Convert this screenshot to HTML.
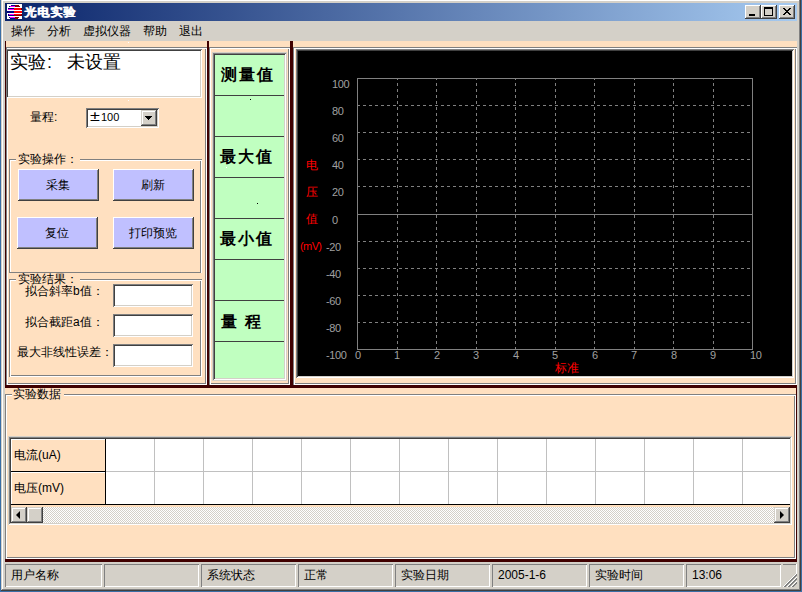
<!DOCTYPE html>
<html><head><meta charset="utf-8">
<style>
*{margin:0;padding:0;box-sizing:border-box}
html,body{width:802px;height:592px;overflow:hidden}
body{background:#3a6ea5;position:relative;font-family:"Liberation Sans",sans-serif;font-size:12px;color:#000;line-height:1}
.a{position:absolute}
.win{left:1px;top:-1px;width:800px;height:592px;background:#d4d0c8;box-shadow:inset -1px -1px #404040,inset 1px 1px #d4d0c8,inset -2px -2px #808080,inset 2px 2px #fff}
.title{left:5px;top:3px;width:792px;height:18px;background:linear-gradient(to right,#0a246a,#a6caf0)}
.ttext{left:24px;top:3px;color:#fff;font-weight:bold;font-size:12px;line-height:18px;white-space:nowrap;letter-spacing:1px;text-shadow:1px 0 0 #fff}
.cb{top:5px;width:16px;height:14px;background:#d4d0c8;box-shadow:inset -1px -1px #404040,inset 1px 1px #fff,inset -2px -2px #808080}
.menu{top:21px;height:20px;line-height:20px;font-size:12px;white-space:nowrap}
.client{left:5px;top:41px;width:792px;height:521px;background:#ffe0c0}
.red{background:#400000}
.etch{box-shadow:inset 1px 1px #808080,inset -1px -1px #fff,inset 2px 2px #fff,inset -2px -2px #808080}
.sunk{background:#fff;box-shadow:inset 1px 1px #808080,inset -1px -1px #fff,inset 2px 2px #404040,inset -2px -2px #d4d0c8}
.grp{border-top:1px solid #808080;box-shadow:inset 1px 0 #808080,inset 2px 0 #fff,0 1px #fff inset}
.btn{background:#c0c0ff;box-shadow:inset -1px -1px #404040,inset 1px 1px #fff,inset -2px -2px #808080;text-align:center;font-size:12px;padding-right:2px}
.lbl{white-space:nowrap;font-size:12px}
.sp{top:564px;height:23px;box-shadow:inset 1px 1px #808080,inset -1px -1px #fff;white-space:nowrap;font-size:12px;line-height:23px;padding-left:6px}
.kai{font-family:"Liberation Sans",sans-serif;font-weight:bold;font-size:16px;white-space:nowrap;letter-spacing:2px}
i{display:inline-block;width:1em;font-style:normal;text-align:center}
.ttext i{margin-right:1px}
.kai i{margin-right:2px}
</style></head><body>
<div class="a win"></div>
<div class="a title"></div>
<svg class="a" style="left:7px;top:4px" width="16" height="16" viewBox="0 0 16 16" shape-rendering="crispEdges">
<rect x="0" y="0" width="15" height="15" fill="#fff"/>
<rect x="4" y="1" width="4" height="1" fill="#000080"/>
<rect x="8" y="1" width="4" height="1" fill="#800000"/>
<rect x="2" y="2" width="1" height="1" fill="#000080"/>
<rect x="3" y="2" width="5" height="1" fill="#ff00ff"/>
<rect x="8" y="2" width="5" height="1" fill="#800000"/>
<rect x="1" y="4" width="6" height="1" fill="#000080"/>
<rect x="7" y="4" width="7" height="1" fill="#ff0000"/>
<rect x="14" y="4" width="1" height="1" fill="#800000"/>
<rect x="1" y="5" width="6" height="1" fill="#ff00ff"/>
<rect x="7" y="5" width="7" height="1" fill="#ff0000"/>
<rect x="14" y="5" width="1" height="1" fill="#800000"/>
<rect x="0" y="7" width="7" height="1" fill="#000080"/>
<rect x="7" y="7" width="8" height="1" fill="#ff0000"/>
<rect x="0" y="8" width="7" height="1" fill="#000080"/>
<rect x="7" y="8" width="8" height="1" fill="#ff0000"/>
<rect x="1" y="10" width="1" height="1" fill="#000080"/>
<rect x="2" y="10" width="5" height="1" fill="#ff00ff"/>
<rect x="7" y="10" width="7" height="1" fill="#ff0000"/>
<rect x="14" y="10" width="1" height="1" fill="#800000"/>
<rect x="1" y="11" width="6" height="1" fill="#000080"/>
<rect x="7" y="11" width="8" height="1" fill="#800000"/>
<rect x="2" y="13" width="1" height="1" fill="#000080"/>
<rect x="3" y="13" width="5" height="1" fill="#ff00ff"/>
<rect x="8" y="13" width="4" height="1" fill="#800000"/>
<rect x="3" y="14" width="5" height="1" fill="#000080"/>
<rect x="8" y="14" width="3" height="1" fill="#800000"/>

</svg>
<div class="a ttext"><i>光</i><i>电</i><i>实</i><i>验</i></div>
<div class="a cb" style="left:745px"><div class="a" style="left:4px;top:9px;width:6px;height:2px;background:#000"></div></div>
<div class="a cb" style="left:761px"><div class="a" style="left:3px;top:2px;width:9px;height:9px;border:1px solid #000;border-top-width:2px"></div></div>
<div class="a cb" style="left:779px"><svg class="a" style="left:4px;top:3px" width="8" height="7" shape-rendering="crispEdges" fill="#000"><rect x="0" y="0" width="1" height="1"/><rect x="1" y="0" width="1" height="1"/><rect x="6" y="0" width="1" height="1"/><rect x="7" y="0" width="1" height="1"/><rect x="1" y="1" width="1" height="1"/><rect x="2" y="1" width="1" height="1"/><rect x="5" y="1" width="1" height="1"/><rect x="6" y="1" width="1" height="1"/><rect x="2" y="2" width="1" height="1"/><rect x="3" y="2" width="1" height="1"/><rect x="4" y="2" width="1" height="1"/><rect x="5" y="2" width="1" height="1"/><rect x="3" y="3" width="1" height="1"/><rect x="4" y="3" width="1" height="1"/><rect x="2" y="4" width="1" height="1"/><rect x="3" y="4" width="1" height="1"/><rect x="4" y="4" width="1" height="1"/><rect x="5" y="4" width="1" height="1"/><rect x="1" y="5" width="1" height="1"/><rect x="2" y="5" width="1" height="1"/><rect x="5" y="5" width="1" height="1"/><rect x="6" y="5" width="1" height="1"/><rect x="0" y="6" width="1" height="1"/><rect x="1" y="6" width="1" height="1"/><rect x="6" y="6" width="1" height="1"/><rect x="7" y="6" width="1" height="1"/></svg></div>
<div class="a menu" style="left:11px"><i>操</i><i>作</i></div>
<div class="a menu" style="left:47px"><i>分</i><i>析</i></div>
<div class="a menu" style="left:83px"><i>虚</i><i>拟</i><i>仪</i><i>器</i></div>
<div class="a menu" style="left:143px"><i>帮</i><i>助</i></div>
<div class="a menu" style="left:179px"><i>退</i><i>出</i></div>

<div class="a client"></div>

<!-- left panel -->
<div class="a red" style="left:5px;top:41px;width:1px;height:346px"></div>
<div class="a etch" style="left:6px;top:47px;width:201px;height:338px"></div>
<div class="a sunk" style="left:6px;top:49px;width:196px;height:49px"></div>
<div class="a" style="left:10px;top:52px;font-size:18px;line-height:20px;white-space:nowrap"><i>实</i><i>验</i><span style="margin-left:1px">:</span><span style="margin-left:15px"><i>未</i><i>设</i><i>置</i></span></div>
<div class="a lbl" style="left:30px;top:111px"><i>量</i><i>程</i>:</div>
<div class="a sunk" style="left:86px;top:108px;width:73px;height:20px"></div>
<div class="a lbl" style="left:89px;top:111px"><span style="display:inline-block;width:12px;text-align:center;transform:translateY(-1px) scale(1.5,1.2)">±</span><span style="font-size:11px">100</span></div>
<div class="a" style="left:141px;top:110px;width:16px;height:16px;background:#d4d0c8;box-shadow:inset -1px -1px #404040,inset 1px 1px #d4d0c8,inset -2px -2px #808080,inset 2px 2px #fff"><svg class="a" style="left:4px;top:6px" width="7" height="4" shape-rendering="crispEdges"><rect x="0" y="0" width="7" height="1"/><rect x="1" y="1" width="5" height="1"/><rect x="2" y="2" width="3" height="1"/><rect x="3" y="3" width="1" height="1"/></svg></div>

<div class="a" style="left:9px;top:159px;width:193px;height:114px;box-shadow:inset 1px 1px #808080,inset -1px 0 #fff,inset 0 -1px #808080,inset 2px 2px #fff,inset -2px 0 #808080"></div>
<div class="a lbl" style="left:16px;top:153px;width:64px;height:12px;background:#ffe0c0;padding-left:2px"><i>实</i><i>验</i><i>操</i><i>作</i><i>：</i></div>
<div class="a btn" style="left:18px;top:169px;width:81px;height:32px;line-height:32px"><i>采</i><i>集</i></div>
<div class="a btn" style="left:113px;top:169px;width:81px;height:32px;line-height:32px"><i>刷</i><i>新</i></div>
<div class="a btn" style="left:17px;top:217px;width:81px;height:32px;line-height:32px"><i>复</i><i>位</i></div>
<div class="a btn" style="left:113px;top:217px;width:81px;height:32px;line-height:32px"><i>打</i><i>印</i><i>预</i><i>览</i></div>

<div class="a" style="left:9px;top:279px;width:193px;height:98px;box-shadow:inset 1px 1px #808080,inset -1px -1px #fff,inset 2px 2px #fff,inset -2px -2px #808080"></div>
<div class="a lbl" style="left:16px;top:273px;width:64px;height:12px;background:#ffe0c0;padding-left:2px"><i>实</i><i>验</i><i>结</i><i>果</i><i>：</i></div>
<div class="a lbl" style="left:25px;top:285px"><i>拟</i><i>合</i><i>斜</i><i>率</i>b<i>值</i><i>：</i></div>
<div class="a lbl" style="left:25px;top:316px"><i>拟</i><i>合</i><i>截</i><i>距</i>a<i>值</i><i>：</i></div>
<div class="a lbl" style="left:17px;top:346px"><i>最</i><i>大</i><i>非</i><i>线</i><i>性</i><i>误</i><i>差</i><i>：</i></div>
<div class="a sunk" style="left:113px;top:284px;width:80px;height:23px"></div>
<div class="a sunk" style="left:113px;top:314px;width:80px;height:23px"></div>
<div class="a sunk" style="left:113px;top:344px;width:80px;height:23px"></div>

<!-- middle panel -->
<div class="a red" style="left:207px;top:41px;width:2px;height:346px"></div>
<div class="a etch" style="left:209px;top:47px;width:81px;height:338px"></div>
<div class="a" style="left:212px;top:52px;width:75px;height:329px;background:#c0ffc0;box-shadow:inset 1px 1px #d4d0c8,inset -1px -1px #d4d0c8,inset 2px 2px #808080,inset -2px -2px #fff,inset 3px 3px #404040,inset -3px -3px #d4d0c8"></div>
<div class="a" style="left:215px;top:95px;width:69px;height:1px;background:#404040"></div>
<div class="a" style="left:215px;top:136px;width:69px;height:1px;background:#404040"></div>
<div class="a" style="left:215px;top:177px;width:69px;height:1px;background:#404040"></div>
<div class="a" style="left:215px;top:218px;width:69px;height:1px;background:#404040"></div>
<div class="a" style="left:215px;top:259px;width:69px;height:1px;background:#404040"></div>
<div class="a" style="left:215px;top:300px;width:69px;height:1px;background:#404040"></div>
<div class="a" style="left:215px;top:341px;width:69px;height:1px;background:#404040"></div>
<div class="a kai" style="left:221px;top:67px"><i>测</i><i>量</i><i>值</i></div>
<div class="a kai" style="left:220px;top:149px"><i>最</i><i>大</i><i>值</i></div>
<div class="a kai" style="left:220px;top:231px"><i>最</i><i>小</i><i>值</i></div>
<div class="a kai" style="left:221px;top:314px"><i>量</i> <i>程</i></div>
<div class="a" style="left:250px;top:99px;width:1px;height:1px;background:#000"></div>
<div class="a" style="left:257px;top:203px;width:1px;height:1px;background:#000"></div>

<!-- right panel -->
<div class="a red" style="left:290px;top:41px;width:3px;height:346px"></div>
<div class="a etch" style="left:293px;top:47px;width:504px;height:338px"></div>
<div class="a" style="left:296px;top:49px;width:498px;height:329px;background:#000;box-shadow:inset 1px 1px #808080,inset -1px -1px #fff,inset 2px 2px #404040,inset -2px -2px #d4d0c8"></div>
<svg class="a" style="left:0;top:0" width="802" height="592" shape-rendering="crispEdges">
<g stroke="#808080" stroke-width="1" fill="none">
<path d="M357.5 78 V349.5 H752.5 V78.5 H357" />
<path d="M357 214.5 H752" />
</g>
<g stroke="#808080" stroke-width="1" stroke-dasharray="3 3" fill="none">
<path d="M357 105.5 H752 M357 132.5 H752 M357 159.5 H752 M357 186.5 H752 M357 241.5 H752 M357 268.5 H752 M357 295.5 H752 M357 322.5 H752"/>
<path d="M397.5 350 V78 M436.5 350 V78 M476.5 350 V78 M515.5 350 V78 M555.5 350 V78 M594.5 350 V78 M634.5 350 V78 M673.5 350 V78 M713.5 350 V78"/>
</g>
</svg>
<div class="a" style="left:0;top:0;font-size:11px;color:#a0a0a0;white-space:nowrap;letter-spacing:-0.4px">
<span class="a" style="left:332px;top:79px">100</span><span class="a" style="left:332px;top:106px">80</span><span class="a" style="left:332px;top:133px">60</span><span class="a" style="left:332px;top:160px">40</span><span class="a" style="left:332px;top:187px">20</span><span class="a" style="left:332px;top:215px">0</span><span class="a" style="left:326px;top:242px">-20</span><span class="a" style="left:326px;top:269px">-40</span><span class="a" style="left:326px;top:296px">-60</span><span class="a" style="left:326px;top:323px">-80</span><span class="a" style="left:326px;top:350px">-100</span>
</div>
<div class="a" style="left:306px;top:152px;color:#f00;font-size:12px;line-height:27px;white-space:pre"><i>电</i>
<i>压</i>
<i>值</i></div>
<div class="a" style="left:300px;top:241px;color:#f00;font-size:11px;white-space:nowrap;letter-spacing:-0.6px">(mV)</div>
<div class="a" style="left:555px;top:362px;color:#f00;font-size:12px;white-space:nowrap"><i>标</i><i>准</i></div>
<div class="a" style="left:0;top:350px;font-size:11px;color:#a0a0a0;white-space:nowrap;letter-spacing:-0.4px">
<span class="a" style="left:355px">0</span><span class="a" style="left:394px">1</span><span class="a" style="left:434px">2</span><span class="a" style="left:473px">3</span><span class="a" style="left:513px">4</span><span class="a" style="left:552px">5</span><span class="a" style="left:592px">6</span><span class="a" style="left:631px">7</span><span class="a" style="left:671px">8</span><span class="a" style="left:710px">9</span><span class="a" style="left:750px">10</span>
</div>

<div class="a" style="left:128px;top:42px;width:1px;height:1px;background:#fff"></div><div class="a" style="left:128px;top:100px;width:1px;height:1px;background:#fff"></div><div class="a" style="left:226px;top:167px;width:1px;height:1px;background:#fff"></div>
<!-- horizontal red separators -->
<div class="a red" style="left:5px;top:385px;width:792px;height:3px"></div>

<!-- bottom panel -->
<div class="a" style="left:5px;top:394px;width:791px;height:165px;box-shadow:inset 1px 1px #808080,inset -1px -1px #fff,inset 2px 2px #fff,inset -2px -2px #808080"></div>
<div class="a red" style="left:796px;top:387px;width:1px;height:175px"></div>
<div class="a lbl" style="left:12px;top:388px;width:52px;height:12px;background:#ffe0c0;padding-left:1px"><i>实</i><i>验</i><i>数</i><i>据</i></div>

<!-- grid -->
<div class="a" style="left:8px;top:436px;width:784px;height:89px;background:#ffe0c0;box-shadow:inset 1px 1px #d4d0c8,inset -1px -1px #fff,inset 2px 2px #808080,inset -2px -2px #d4d0c8,inset 3px 3px #404040"></div>
<svg class="a" style="left:0;top:0" width="802" height="592" shape-rendering="crispEdges">
<rect x="106" y="439" width="684" height="65" fill="#fff"/>
<rect x="11" y="439" width="94" height="65" fill="#ffe0c0"/>
<g stroke="#c0c0c0" fill="none">
<path d="M154.5 439 V504"/>
<path d="M203.5 439 V504"/>
<path d="M252.5 439 V504"/>
<path d="M301.5 439 V504"/>
<path d="M350.5 439 V504"/>
<path d="M399.5 439 V504"/>
<path d="M448.5 439 V504"/>
<path d="M497.5 439 V504"/>
<path d="M546.5 439 V504"/>
<path d="M595.5 439 V504"/>
<path d="M644.5 439 V504"/>
<path d="M693.5 439 V504"/>
<path d="M742.5 439 V504"/>
<path d="M106 471.5 H790"/>
</g>
<g stroke="#fff" fill="none"><path d="M11 439.5 H105"/><path d="M11.5 439 V504"/><path d="M11 472.5 H105"/></g>
<g stroke="#000" fill="none"><path d="M105.5 439 V505"/><path d="M11 471.5 H105"/><path d="M11 504.5 H790"/></g>
</svg>
<div class="a lbl" style="left:14px;top:449px"><i>电</i><i>流</i>(uA)</div>
<div class="a lbl" style="left:14px;top:482px"><i>电</i><i>压</i>(mV)</div>
<!-- scrollbar -->
<div class="a" style="left:11px;top:507px;width:779px;height:16px;background-color:#d4d0c8;background-image:repeating-conic-gradient(#fff 0 25%, #d4d0c8 0 50%);background-size:2px 2px"></div>
<div class="a" style="left:11px;top:507px;width:16px;height:16px;background:#d4d0c8;box-shadow:inset -1px -1px #404040,inset 1px 1px #d4d0c8,inset -2px -2px #808080,inset 2px 2px #fff"><div class="a" style="left:5px;top:4px;width:0;height:0;border-top:4px solid transparent;border-bottom:4px solid transparent;border-right:4px solid #000"></div></div>
<div class="a" style="left:27px;top:507px;width:16px;height:16px;background:#d4d0c8;box-shadow:inset -1px -1px #404040,inset 1px 1px #d4d0c8,inset -2px -2px #808080,inset 2px 2px #fff"></div>
<div class="a" style="left:774px;top:507px;width:16px;height:16px;background:#d4d0c8;box-shadow:inset -1px -1px #404040,inset 1px 1px #d4d0c8,inset -2px -2px #808080,inset 2px 2px #fff"><div class="a" style="left:6px;top:4px;width:0;height:0;border-top:4px solid transparent;border-bottom:4px solid transparent;border-left:4px solid #000"></div></div>

<!-- bottom red -->
<div class="a red" style="left:5px;top:559px;width:792px;height:3px"></div>
<!-- status bar -->
<div class="a sp" style="left:5px;width:97px"><i>用</i><i>户</i><i>名</i><i>称</i></div>
<div class="a sp" style="left:104px;width:95px"></div>
<div class="a sp" style="left:201px;width:95px"><i>系</i><i>统</i><i>状</i><i>态</i></div>
<div class="a sp" style="left:298px;width:95px"><i>正</i><i>常</i></div>
<div class="a sp" style="left:395px;width:95px"><i>实</i><i>验</i><i>日</i><i>期</i></div>
<div class="a sp" style="left:492px;width:95px">2005-1-6</div>
<div class="a sp" style="left:589px;width:95px"><i>实</i><i>验</i><i>时</i><i>间</i></div>
<div class="a sp" style="left:686px;width:95px">13:06</div>
<div class="a" style="left:783px;top:564px;width:14px;height:1px;background:#808080"></div>
<div class="a" style="left:796px;top:564px;width:1px;height:10px;background:#fff"></div>
<svg class="a" style="left:783px;top:573px" width="14" height="14" shape-rendering="crispEdges"><rect x="0" y="13" width="1" height="1" fill="#fff"/><rect x="1" y="12" width="1" height="1" fill="#fff"/><rect x="2" y="11" width="1" height="1" fill="#fff"/><rect x="3" y="10" width="1" height="1" fill="#fff"/><rect x="4" y="9" width="1" height="1" fill="#fff"/><rect x="5" y="8" width="1" height="1" fill="#fff"/><rect x="6" y="7" width="1" height="1" fill="#fff"/><rect x="7" y="6" width="1" height="1" fill="#fff"/><rect x="8" y="5" width="1" height="1" fill="#fff"/><rect x="9" y="4" width="1" height="1" fill="#fff"/><rect x="10" y="3" width="1" height="1" fill="#fff"/><rect x="11" y="2" width="1" height="1" fill="#fff"/><rect x="12" y="1" width="1" height="1" fill="#fff"/><rect x="13" y="0" width="1" height="1" fill="#fff"/><rect x="1" y="13" width="1" height="1" fill="#808080"/><rect x="2" y="12" width="1" height="1" fill="#808080"/><rect x="3" y="11" width="1" height="1" fill="#808080"/><rect x="4" y="10" width="1" height="1" fill="#808080"/><rect x="5" y="9" width="1" height="1" fill="#808080"/><rect x="6" y="8" width="1" height="1" fill="#808080"/><rect x="7" y="7" width="1" height="1" fill="#808080"/><rect x="8" y="6" width="1" height="1" fill="#808080"/><rect x="9" y="5" width="1" height="1" fill="#808080"/><rect x="10" y="4" width="1" height="1" fill="#808080"/><rect x="11" y="3" width="1" height="1" fill="#808080"/><rect x="12" y="2" width="1" height="1" fill="#808080"/><rect x="13" y="1" width="1" height="1" fill="#808080"/><rect x="2" y="13" width="1" height="1" fill="#808080"/><rect x="3" y="12" width="1" height="1" fill="#808080"/><rect x="4" y="11" width="1" height="1" fill="#808080"/><rect x="5" y="10" width="1" height="1" fill="#808080"/><rect x="6" y="9" width="1" height="1" fill="#808080"/><rect x="7" y="8" width="1" height="1" fill="#808080"/><rect x="8" y="7" width="1" height="1" fill="#808080"/><rect x="9" y="6" width="1" height="1" fill="#808080"/><rect x="10" y="5" width="1" height="1" fill="#808080"/><rect x="11" y="4" width="1" height="1" fill="#808080"/><rect x="12" y="3" width="1" height="1" fill="#808080"/><rect x="13" y="2" width="1" height="1" fill="#808080"/><rect x="4" y="13" width="1" height="1" fill="#fff"/><rect x="5" y="12" width="1" height="1" fill="#fff"/><rect x="6" y="11" width="1" height="1" fill="#fff"/><rect x="7" y="10" width="1" height="1" fill="#fff"/><rect x="8" y="9" width="1" height="1" fill="#fff"/><rect x="9" y="8" width="1" height="1" fill="#fff"/><rect x="10" y="7" width="1" height="1" fill="#fff"/><rect x="11" y="6" width="1" height="1" fill="#fff"/><rect x="12" y="5" width="1" height="1" fill="#fff"/><rect x="13" y="4" width="1" height="1" fill="#fff"/><rect x="5" y="13" width="1" height="1" fill="#808080"/><rect x="6" y="12" width="1" height="1" fill="#808080"/><rect x="7" y="11" width="1" height="1" fill="#808080"/><rect x="8" y="10" width="1" height="1" fill="#808080"/><rect x="9" y="9" width="1" height="1" fill="#808080"/><rect x="10" y="8" width="1" height="1" fill="#808080"/><rect x="11" y="7" width="1" height="1" fill="#808080"/><rect x="12" y="6" width="1" height="1" fill="#808080"/><rect x="13" y="5" width="1" height="1" fill="#808080"/><rect x="6" y="13" width="1" height="1" fill="#808080"/><rect x="7" y="12" width="1" height="1" fill="#808080"/><rect x="8" y="11" width="1" height="1" fill="#808080"/><rect x="9" y="10" width="1" height="1" fill="#808080"/><rect x="10" y="9" width="1" height="1" fill="#808080"/><rect x="11" y="8" width="1" height="1" fill="#808080"/><rect x="12" y="7" width="1" height="1" fill="#808080"/><rect x="13" y="6" width="1" height="1" fill="#808080"/><rect x="8" y="13" width="1" height="1" fill="#fff"/><rect x="9" y="12" width="1" height="1" fill="#fff"/><rect x="10" y="11" width="1" height="1" fill="#fff"/><rect x="11" y="10" width="1" height="1" fill="#fff"/><rect x="12" y="9" width="1" height="1" fill="#fff"/><rect x="13" y="8" width="1" height="1" fill="#fff"/><rect x="9" y="13" width="1" height="1" fill="#808080"/><rect x="10" y="12" width="1" height="1" fill="#808080"/><rect x="11" y="11" width="1" height="1" fill="#808080"/><rect x="12" y="10" width="1" height="1" fill="#808080"/><rect x="13" y="9" width="1" height="1" fill="#808080"/><rect x="10" y="13" width="1" height="1" fill="#808080"/><rect x="11" y="12" width="1" height="1" fill="#808080"/><rect x="12" y="11" width="1" height="1" fill="#808080"/><rect x="13" y="10" width="1" height="1" fill="#808080"/></svg>

</body></html>
